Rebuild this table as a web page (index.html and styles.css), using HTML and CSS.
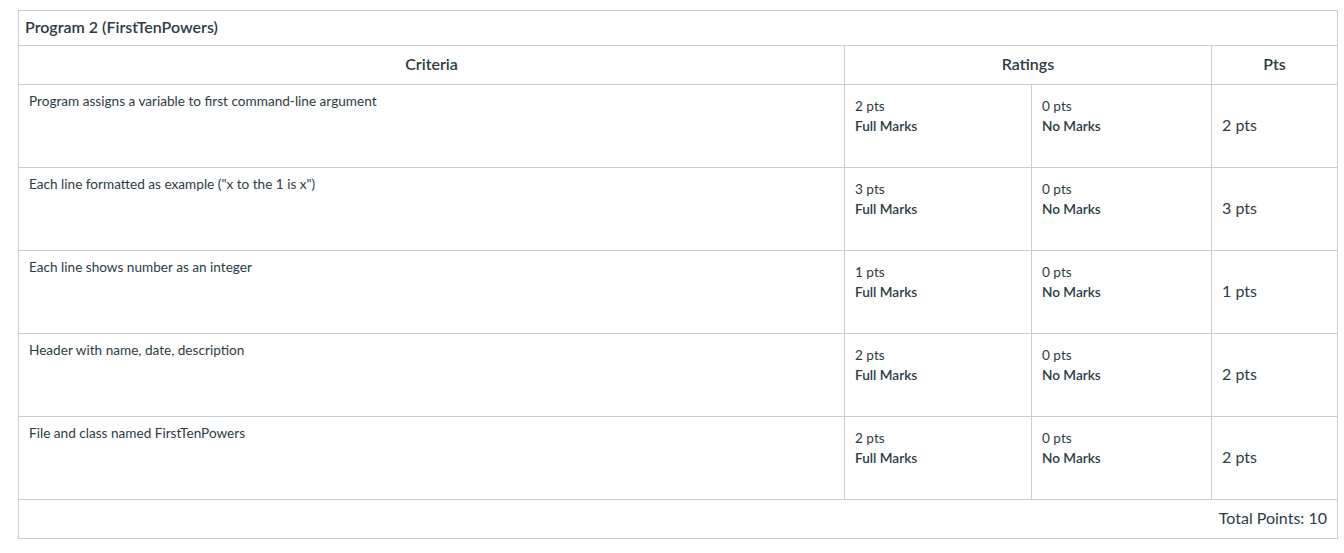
FILE: index.html
```html
<!DOCTYPE html>
<html>
<head>
<meta charset="utf-8">
<link rel="stylesheet" href="styles.css">
</head>
<body>
<div class="rubric">
  <div class="rubric-title">Program 2 (FirstTenPowers)</div>
  <table class="rubric-table">
    <colgroup>
      <col class="c-crit"><col class="c-r1"><col class="c-r2"><col class="c-pts">
    </colgroup>
    <thead>
      <tr>
        <th>Criteria</th>
        <th colspan="2">Ratings</th>
        <th>Pts</th>
      </tr>
    </thead>
    <tbody>
      <tr>
        <td class="crit">Program assigns a variable to first command-line argument</td>
        <td class="rating"><div class="rp">2 pts</div><div class="rd">Full Marks</div></td>
        <td class="rating"><div class="rp">0 pts</div><div class="rd">No Marks</div></td>
        <td class="pts">2 pts</td>
      </tr>
      <tr>
        <td class="crit">Each line formatted as example ("x to the 1 is x")</td>
        <td class="rating"><div class="rp">3 pts</div><div class="rd">Full Marks</div></td>
        <td class="rating"><div class="rp">0 pts</div><div class="rd">No Marks</div></td>
        <td class="pts">3 pts</td>
      </tr>
      <tr>
        <td class="crit">Each line shows number as an integer</td>
        <td class="rating"><div class="rp">1 pts</div><div class="rd">Full Marks</div></td>
        <td class="rating"><div class="rp">0 pts</div><div class="rd">No Marks</div></td>
        <td class="pts">1 pts</td>
      </tr>
      <tr>
        <td class="crit">Header with name, date, description</td>
        <td class="rating"><div class="rp">2 pts</div><div class="rd">Full Marks</div></td>
        <td class="rating"><div class="rp">0 pts</div><div class="rd">No Marks</div></td>
        <td class="pts">2 pts</td>
      </tr>
      <tr>
        <td class="crit">File and class named FirstTenPowers</td>
        <td class="rating"><div class="rp">2 pts</div><div class="rd">Full Marks</div></td>
        <td class="rating"><div class="rp">0 pts</div><div class="rd">No Marks</div></td>
        <td class="pts">2 pts</td>
      </tr>
    </tbody>
    <tfoot>
      <tr>
        <td colspan="4" class="total">Total Points: 10</td>
      </tr>
    </tfoot>
  </table>
</div>
</body>
</html>
```
FILE: styles.css
```css
html, body {
  margin: 0;
  background: #ffffff;
}
body {
  padding: 10px 0 0 18px;
  font-family: Lato, "Liberation Sans", sans-serif;
  color: #2d3b45;
}
.rubric {
  width: 1320px;
}
.rubric-title {
  box-sizing: border-box;
  height: 35px;
  border: 1px solid #c7cdd1;
  border-bottom: none;
  padding: 0 6px 3px 6px;
  display: flex;
  align-items: center;
  font-size: 16px;
  font-weight: 600;
}
.rubric-table {
  width: 1319px;
  border-collapse: collapse;
  table-layout: fixed;
}
.c-crit { width: 826px; }
.c-r1 { width: 187px; }
.c-r2 { width: 180px; }
.c-pts { width: 126px; }
.rubric-table th,
.rubric-table td {
  border: 1px solid #c7cdd1;
  padding: 0;
}
.rubric-table th {
  height: 39px;
  box-sizing: border-box;
  padding-bottom: 3px;
  font-size: 16px;
  font-weight: 600;
  text-align: center;
  vertical-align: middle;
}
.rubric-table tbody td {
  height: 83px;
  box-sizing: border-box;
  vertical-align: top;
}
.crit {
  font-size: 13.6px;
  line-height: 18px;
  padding: 7px 10px 0 10px !important;
}
.rating {
  font-size: 13.6px;
  line-height: 20px;
  padding: 11px 10px 0 10px !important;
}
.rd {
  font-weight: 600;
}
.rubric-table tbody td.pts {
  vertical-align: middle;
  font-size: 16px;
  padding: 0 10px 4px 10px !important;
}
.total {
  height: 39px;
  box-sizing: border-box;
  text-align: right;
  vertical-align: middle;
  font-size: 16px;
  padding: 0 10px 3px 10px !important;
}
```
